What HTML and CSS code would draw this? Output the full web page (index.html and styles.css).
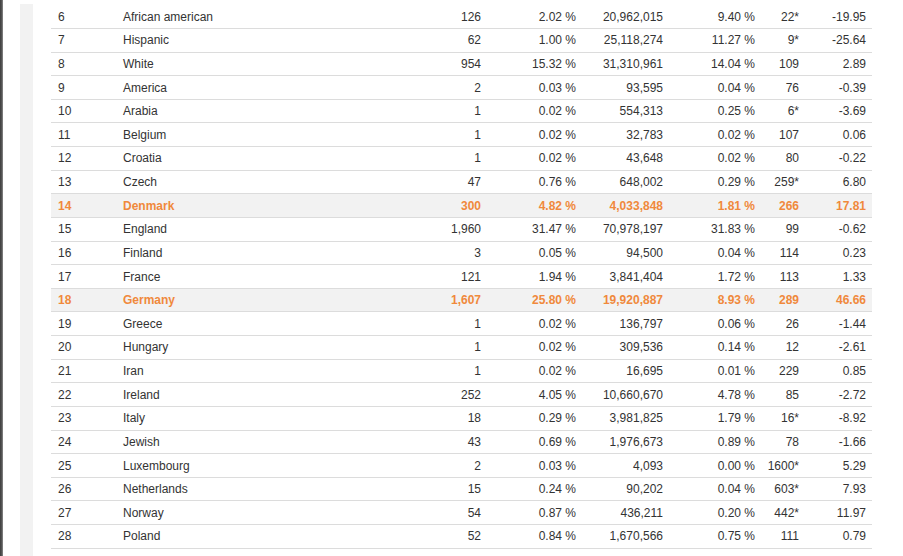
FILE: index.html
```html
<!DOCTYPE html>
<html lang="en">
<head>
<meta charset="utf-8">
<title>Table</title>
<link rel="stylesheet" href="styles.css">
</head>
<body>
<div class="page">
  <div class="edge"></div>
  <div class="rail"></div>
  <div class="content">
    <table class="data">
      <colgroup>
        <col class="c-rank"><col class="c-name"><col class="c-count"><col class="c-pct"><col class="c-pop"><col class="c-pct2"><col class="c-pos"><col class="c-val">
      </colgroup>
      <tbody>
        <tr><td>6</td><td>African american</td><td class="r">126</td><td class="r">2.02 %</td><td class="r">20,962,015</td><td class="r">9.40 %</td><td class="r">22*</td><td class="r">-19.95</td></tr>
        <tr><td>7</td><td>Hispanic</td><td class="r">62</td><td class="r">1.00 %</td><td class="r">25,118,274</td><td class="r">11.27 %</td><td class="r">9*</td><td class="r">-25.64</td></tr>
        <tr><td>8</td><td>White</td><td class="r">954</td><td class="r">15.32 %</td><td class="r">31,310,961</td><td class="r">14.04 %</td><td class="r">109</td><td class="r">2.89</td></tr>
        <tr><td>9</td><td>America</td><td class="r">2</td><td class="r">0.03 %</td><td class="r">93,595</td><td class="r">0.04 %</td><td class="r">76</td><td class="r">-0.39</td></tr>
        <tr><td>10</td><td>Arabia</td><td class="r">1</td><td class="r">0.02 %</td><td class="r">554,313</td><td class="r">0.25 %</td><td class="r">6*</td><td class="r">-3.69</td></tr>
        <tr><td>11</td><td>Belgium</td><td class="r">1</td><td class="r">0.02 %</td><td class="r">32,783</td><td class="r">0.02 %</td><td class="r">107</td><td class="r">0.06</td></tr>
        <tr><td>12</td><td>Croatia</td><td class="r">1</td><td class="r">0.02 %</td><td class="r">43,648</td><td class="r">0.02 %</td><td class="r">80</td><td class="r">-0.22</td></tr>
        <tr><td>13</td><td>Czech</td><td class="r">47</td><td class="r">0.76 %</td><td class="r">648,002</td><td class="r">0.29 %</td><td class="r">259*</td><td class="r">6.80</td></tr>
        <tr class="hl"><td>14</td><td>Denmark</td><td class="r">300</td><td class="r">4.82 %</td><td class="r">4,033,848</td><td class="r">1.81 %</td><td class="r">266</td><td class="r">17.81</td></tr>
        <tr><td>15</td><td>England</td><td class="r">1,960</td><td class="r">31.47 %</td><td class="r">70,978,197</td><td class="r">31.83 %</td><td class="r">99</td><td class="r">-0.62</td></tr>
        <tr><td>16</td><td>Finland</td><td class="r">3</td><td class="r">0.05 %</td><td class="r">94,500</td><td class="r">0.04 %</td><td class="r">114</td><td class="r">0.23</td></tr>
        <tr><td>17</td><td>France</td><td class="r">121</td><td class="r">1.94 %</td><td class="r">3,841,404</td><td class="r">1.72 %</td><td class="r">113</td><td class="r">1.33</td></tr>
        <tr class="hl"><td>18</td><td>Germany</td><td class="r">1,607</td><td class="r">25.80 %</td><td class="r">19,920,887</td><td class="r">8.93 %</td><td class="r">289</td><td class="r">46.66</td></tr>
        <tr><td>19</td><td>Greece</td><td class="r">1</td><td class="r">0.02 %</td><td class="r">136,797</td><td class="r">0.06 %</td><td class="r">26</td><td class="r">-1.44</td></tr>
        <tr><td>20</td><td>Hungary</td><td class="r">1</td><td class="r">0.02 %</td><td class="r">309,536</td><td class="r">0.14 %</td><td class="r">12</td><td class="r">-2.61</td></tr>
        <tr><td>21</td><td>Iran</td><td class="r">1</td><td class="r">0.02 %</td><td class="r">16,695</td><td class="r">0.01 %</td><td class="r">229</td><td class="r">0.85</td></tr>
        <tr><td>22</td><td>Ireland</td><td class="r">252</td><td class="r">4.05 %</td><td class="r">10,660,670</td><td class="r">4.78 %</td><td class="r">85</td><td class="r">-2.72</td></tr>
        <tr><td>23</td><td>Italy</td><td class="r">18</td><td class="r">0.29 %</td><td class="r">3,981,825</td><td class="r">1.79 %</td><td class="r">16*</td><td class="r">-8.92</td></tr>
        <tr><td>24</td><td>Jewish</td><td class="r">43</td><td class="r">0.69 %</td><td class="r">1,976,673</td><td class="r">0.89 %</td><td class="r">78</td><td class="r">-1.66</td></tr>
        <tr><td>25</td><td>Luxembourg</td><td class="r">2</td><td class="r">0.03 %</td><td class="r">4,093</td><td class="r">0.00 %</td><td class="r">1600*</td><td class="r">5.29</td></tr>
        <tr><td>26</td><td>Netherlands</td><td class="r">15</td><td class="r">0.24 %</td><td class="r">90,202</td><td class="r">0.04 %</td><td class="r">603*</td><td class="r">7.93</td></tr>
        <tr><td>27</td><td>Norway</td><td class="r">54</td><td class="r">0.87 %</td><td class="r">436,211</td><td class="r">0.20 %</td><td class="r">442*</td><td class="r">11.97</td></tr>
        <tr><td>28</td><td>Poland</td><td class="r">52</td><td class="r">0.84 %</td><td class="r">1,670,566</td><td class="r">0.75 %</td><td class="r">111</td><td class="r">0.79</td></tr>
      </tbody>
    </table>
  </div>
</div>
</body>
</html>
```

FILE: styles.css
```css
html, body {
  margin: 0;
  padding: 0;
  background: #ffffff;
  height: 100%;
  overflow: hidden;
}

body {
  font-family: "Liberation Sans", Arial, sans-serif;
  font-size: 12px;
  color: #333333;
}

.page {
  display: flex;
  align-items: stretch;
  height: 556px;
}

.edge {
  width: 3px;
  flex: none;
  background: linear-gradient(to right, #3c3c3c, #5c5c5c 70%, #9a9a9a);
}

.rail {
  width: 13px;
  flex: none;
  margin-left: 17px;
  margin-top: 4px;
  background: #f2f2f2;
}

.content {
  flex: none;
  padding-left: 18px;
  padding-top: 5.36px;
}

.data {
  width: 821px;
  table-layout: fixed;
  border-collapse: separate;
  border-spacing: 0;
}

.c-rank { width: 65px; }
.c-name { width: 284px; }
.c-count { width: 87px; }
.c-pct { width: 95px; }
.c-pop { width: 87px; }
.c-pct2 { width: 92px; }
.c-pos { width: 44px; }
.c-val { width: 67px; }

.data td {
  height: 22.636px;
  padding: 0 6px 0 7px;
  border-bottom: 1px solid #dcdcdc;
  vertical-align: middle;
  white-space: nowrap;
  line-height: 14px;
}

.data td.r {
  text-align: right;
  padding: 0 6px 0 0;
}

.data tr.hl td {
  background: #f2f2f2;
  color: #f0893c;
  font-weight: bold;
}
```
